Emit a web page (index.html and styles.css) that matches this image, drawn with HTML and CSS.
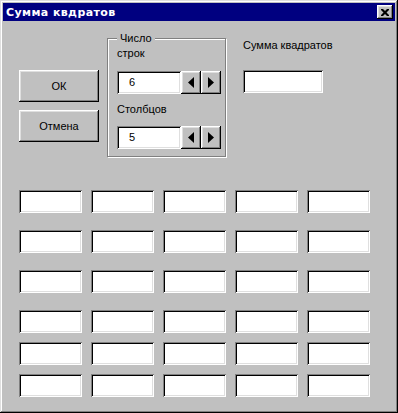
FILE: index.html
```html
<!DOCTYPE html>
<html>

<head>
    <meta charset="utf-8">
    <title>Сумма квдратов</title>
    <link rel="stylesheet" href="styles.css">
</head>

<body>
    <div class="window">
        <div class="titlebar">
            <span class="title">Сумма квдратов</span>
            <span class="close">
                <svg width="8" height="7" viewBox="0 0 8 7">
                    <path d="M0 0h2l2 2 2-2h2v1l-2.5 2.5L8 6v1H6L4 5 2 7H0V6l2.5-2.5L0 1z" fill="#000"/>
                </svg>
            </span>
        </div>

        <div class="top">
            <div class="buttons">
                <div class="btn">ОК</div>
                <div class="btn">Отмена</div>
            </div>

            <fieldset class="group">
                <legend>Число</legend>
                <div class="label">строк</div>
                <div class="spin spin-first">
                    <div class="field">6</div>
                    <div class="arrow"><svg width="6" height="11"><polygon points="6,0 6,11 0,5.5" fill="#000"/></svg></div>
                    <div class="arrow"><svg width="6" height="11"><polygon points="0,0 0,11 6,5.5" fill="#000"/></svg></div>
                </div>
                <div class="label label-second">Столбцов</div>
                <div class="spin spin-second">
                    <div class="field">5</div>
                    <div class="arrow"><svg width="6" height="11"><polygon points="6,0 6,11 0,5.5" fill="#000"/></svg></div>
                    <div class="arrow"><svg width="6" height="11"><polygon points="0,0 0,11 6,5.5" fill="#000"/></svg></div>
                </div>
            </fieldset>

            <div class="sum">
                <div class="label">Сумма квадратов</div>
                <div class="field sum-field"></div>
            </div>
        </div>

        <div class="grid">
            <div class="field"></div><div class="field"></div><div class="field"></div><div class="field"></div><div class="field"></div>
            <div class="field"></div><div class="field"></div><div class="field"></div><div class="field"></div><div class="field"></div>
            <div class="field"></div><div class="field"></div><div class="field"></div><div class="field"></div><div class="field"></div>
            <div class="field"></div><div class="field"></div><div class="field"></div><div class="field"></div><div class="field"></div>
            <div class="field"></div><div class="field"></div><div class="field"></div><div class="field"></div><div class="field"></div>
            <div class="field"></div><div class="field"></div><div class="field"></div><div class="field"></div><div class="field"></div>
        </div>
    </div>
</body>

</html>
```

FILE: styles.css
```css
* {
    margin: 0;
    padding: 0;
    box-sizing: border-box;
}

body {
    background-color: #c0c0c0;
    font-family: "Liberation Sans", Arial, sans-serif;
    font-size: 11px;
    line-height: 13px;
    color: #000;
}

.window {
    width: 398px;
    height: 413px;
    padding: 3px;
    background-color: #c0c0c0;
    box-shadow: inset -1px -1px 0 #000, inset 1px 1px 0 #dfdfdf,
        inset -2px -2px 0 #808080, inset 2px 2px 0 #fff;
}

.titlebar {
    height: 18px;
    background-color: #000080;
    display: flex;
    align-items: center;
    justify-content: space-between;
    padding: 0 2px 0 3px;
}

.title {
    color: #fff;
    font-family: "DejaVu Sans", sans-serif;
    font-weight: bold;
    font-size: 11px;
    letter-spacing: 0.4px;
}

.close {
    width: 16px;
    height: 14px;
    background-color: #c0c0c0;
    display: flex;
    align-items: center;
    justify-content: center;
    padding-right: 1px;
    box-shadow: inset -1px -1px 0 #000, inset 1px 1px 0 #fff,
        inset -2px -2px 0 #808080, inset 2px 2px 0 #dfdfdf;
}

.close svg {
    display: block;
}

/* верхняя часть: кнопки, рамка, сумма */
.top {
    display: flex;
    align-items: flex-start;
}

.buttons {
    margin: 49px 0 0 16px;
    display: flex;
    flex-direction: column;
    gap: 8px;
}

.btn {
    width: 80px;
    height: 32px;
    display: flex;
    align-items: center;
    justify-content: center;
    box-shadow: inset -1px -1px 0 #000, inset 1px 1px 0 #fff,
        inset -2px -2px 0 #808080, inset 2px 2px 0 #dfdfdf;
}

.group {
    margin: 11px 0 0 8px;
    width: 119px;
    padding: 2px 4px 7px 9px;
    border: 1px solid #808080;
    box-shadow: 1px 1px 0 #fff, inset 1px 1px 0 #fff;
}

.group legend {
    padding: 0 3px;
    background-color: #c0c0c0;
}

.label-second {
    margin-top: 9px;
}

.spin {
    display: flex;
}

.spin-first {
    margin-top: 11px;
}

.spin-second {
    margin-top: 10px;
}

.field {
    width: 63px;
    height: 23px;
    background-color: #fff;
    box-shadow: inset 1px 1px 0 #808080, inset -1px -1px 0 #fff,
        inset 2px 2px 0 #000, inset -2px -2px 0 #dfdfdf;
}

.spin .field {
    width: 64px;
    padding-left: 12px;
    display: flex;
    align-items: center;
}

.arrow {
    width: 20px;
    height: 23px;
    display: flex;
    align-items: center;
    justify-content: center;
    box-shadow: inset -1px -1px 0 #000, inset 1px 1px 0 #fff,
        inset -2px -2px 0 #808080, inset 2px 2px 0 #dfdfdf;
}

.arrow svg {
    display: block;
}

.sum {
    margin: 18px 0 0 17px;
}

.sum-field {
    width: 80px;
    margin-top: 18px;
}

/* сетка полей */
.grid {
    margin: 33px 0 0 16px;
    display: grid;
    grid-template-columns: repeat(5, 63px);
    grid-template-rows: 31px 31px 31px 23px 23px 23px;
    column-gap: 9px;
    row-gap: 9px;
    align-items: start;
}
```
